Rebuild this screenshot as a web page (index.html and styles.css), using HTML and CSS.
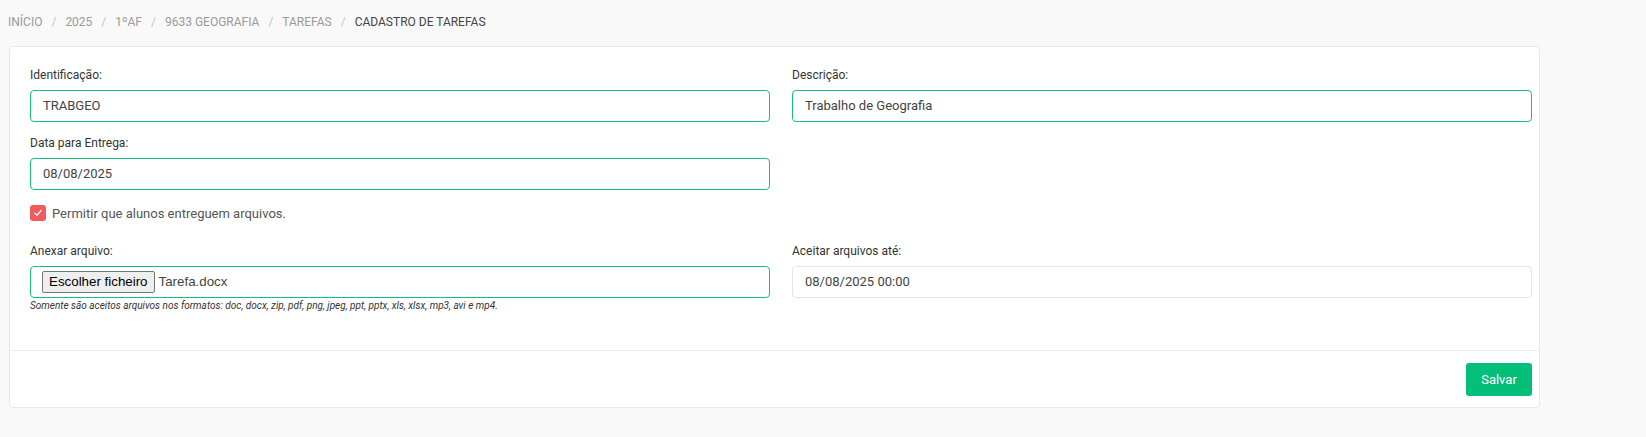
FILE: index.html
```html
<!DOCTYPE html>
<html lang="pt">
<head>
    <meta charset="UTF-8">
    <title>Cadastro de Tarefas</title>
    <link rel="stylesheet" href="styles.css">
</head>
<body>
<ul class="breadcrumb">
    <li>Início</li>
    <li>2025</li>
    <li>1ºAF</li>
    <li>9633 Geografia</li>
    <li>Tarefas</li>
    <li class="active">Cadastro de Tarefas</li>
</ul>
<div class="card">
    <div class="card-body">
        <div class="form-grid">
            <div class="form-group">
                <label class="form-label">Identificação:</label>
                <div class="form-control valid">TRABGEO</div>
            </div>
            <div class="form-group">
                <label class="form-label">Descrição:</label>
                <div class="form-control valid">Trabalho de Geografia</div>
            </div>
            <div class="form-group">
                <label class="form-label">Data para Entrega:</label>
                <div class="form-control valid">08/08/2025</div>
            </div>
            <div class="form-group"></div>
            <div class="form-check">
                <span class="check-box">
                    <svg width="10" height="10" viewBox="0 0 10 10"><path d="M1.8 5.2 L4 7.3 L8.2 2.4" fill="none" stroke="#fff" stroke-width="1.4" stroke-linecap="round" stroke-linejoin="round"/></svg>
                </span>
                <span class="check-label">Permitir que alunos entreguem arquivos.</span>
            </div>
            <div class="form-group attach">
                <label class="form-label">Anexar arquivo:</label>
                <div class="form-control valid file-control">
                    <span class="file-btn">Escolher ficheiro</span>
                    <span class="file-name">Tarefa.docx</span>
                </div>
                <small class="form-hint">Somente são aceitos arquivos nos formatos: doc, docx, zip, pdf, png, jpeg, ppt, pptx, xls, xlsx, mp3, avi e mp4.</small>
            </div>
            <div class="form-group attach">
                <label class="form-label">Aceitar arquivos até:</label>
                <div class="form-control">08/08/2025 00:00</div>
            </div>
        </div>
    </div>
    <div class="card-footer">
        <button class="btn-save">Salvar</button>
    </div>
</div>
</body>
</html>
```

FILE: styles.css
```css
*{
    margin: 0;
    padding: 0;
    box-sizing: border-box;
}
body{
    background: #f9f9f9;
    font-family: Roboto, "Liberation Sans", Arial, sans-serif;
    color: #333;
    padding: 14px 0 0 8px;
}
.breadcrumb{
    list-style: none;
    display: flex;
    font-size: 12px;
    line-height: 16px;
    text-transform: uppercase;
    color: #9a9a9a;
    height: 16px;
}
.breadcrumb>li+li::before{
    content: "/";
    color: #c4c4c4;
    padding: 0 9px;
}
.breadcrumb>li.active{
    color: #444;
}
.card{
    width: 1531px;
    margin: 16px 0 0 1px;
    background: #fff;
    border: 1px solid #e8e8e8;
    border-radius: 4px;
}
.card-body{
    padding: 20px 7px 37px 20px;
    border-bottom: 1px solid #ececec;
}
.form-grid{
    display: grid;
    grid-template-columns: 740px 740px;
    column-gap: 22px;
}
.form-group{
    margin-bottom: 13px;
}
.form-label{
    display: block;
    font-size: 12px;
    line-height: 17px;
    color: #333;
    margin-bottom: 6px;
}
.form-control{
    height: 32px;
    border: 1px solid #e4e4e4;
    border-radius: 4px;
    padding: 0 12px;
    font-size: 13px;
    line-height: 30px;
    color: #444;
}
.form-control.valid{
    border-color: #17bd7c;
}
.form-check{
    grid-column: 1 / 3;
    display: flex;
    align-items: center;
    height: 16px;
    margin: 2px 0 22px;
}
.check-box{
    width: 16px;
    height: 16px;
    border-radius: 3px;
    background: #f25b5b;
    display: flex;
    align-items: center;
    justify-content: center;
}
.check-label{
    margin-left: 6px;
    font-size: 13px;
    color: #555;
}
.attach{
    margin-bottom: 0;
}
.file-control{
    display: flex;
    align-items: center;
    padding: 0 11px;
    font-family: "Liberation Sans", Arial, sans-serif;
}
.file-btn{
    height: 22px;
    line-height: 20px;
    padding: 0 6px;
    background: #efefef;
    border: 1px solid #767676;
    border-radius: 2px;
    font-size: 13.33px;
    color: #000;
}
.file-name{
    margin-left: 4px;
    font-size: 13.33px;
    color: #444;
}
.form-hint{
    display: block;
    margin-top: 1px;
    margin-bottom: 1px;
    font-size: 10px;
    line-height: 13px;
    font-style: italic;
    color: #333;
}
.card-footer{
    display: flex;
    justify-content: flex-end;
    padding: 12px 7px 11px 0;
}
.btn-save{
    width: 66px;
    height: 33px;
    border: none;
    border-radius: 3px;
    background: #04bf7a;
    color: #fff;
    font-family: Roboto, "Liberation Sans", Arial, sans-serif;
    font-size: 13px;
}
```
